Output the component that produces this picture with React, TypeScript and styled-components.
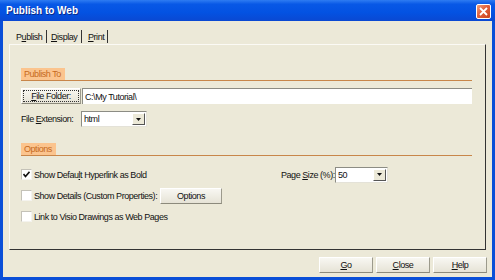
import React from 'react';
import styled, { createGlobalStyle } from 'styled-components';

const GlobalStyle = createGlobalStyle`
  html, body {
    margin: 0;
    padding: 0;
    background: #ece9d8;
  }
  body {
    font-family: 'Liberation Sans', Arial, sans-serif;
    font-size: 9px;
    letter-spacing: -0.45px;
    color: #111;
  }
`;

const Window = styled.div`
  width: 495px;
  height: 280px;
  display: flex;
  flex-direction: column;
  background: #0a4fd8;
  box-sizing: border-box;
`;

const TitleBar = styled.div`
  height: 21px;
  display: flex;
  align-items: center;
  justify-content: space-between;
  padding: 0 4px 0 6px;
  background: linear-gradient(#2e7cf2 0%, #0858e6 20%, #0352e2 60%, #0a48d2 100%);
`;

const Title = styled.span`
  font-weight: bold;
  font-size: 10px;
  letter-spacing: 0;
  color: #fff;
  text-shadow: 1px 1px 0 #0a2a8a;
`;

const CloseBox = styled.div`
  width: 15px;
  height: 15px;
  box-sizing: border-box;
  border: 1px solid #fff;
  border-radius: 2px;
  background: linear-gradient(135deg, #f0a07c 0%, #e0603c 45%, #c8441e 100%);
  display: flex;
  align-items: center;
  justify-content: center;
  margin-top: 1px;
`;

const Body = styled.div`
  flex: 1;
  margin: 0 3px 3px 3px;
  background: #ece9d8;
  padding: 7px 6px 0 6px;
  display: flex;
  flex-direction: column;
`;

const TabStrip = styled.div`
  display: flex;
  height: 16px;
  padding-left: 5px;
`;

const Tab = styled.div<{ $w: number; $pad: number }>`
  width: ${(p) => p.$w}px;
  box-sizing: border-box;
  padding-left: ${(p) => p.$pad}px;
  display: flex;
  align-items: center;
  border-right: 1px solid #333;
  margin-top: 2px;
  height: 13px;
  white-space: nowrap;
`;

const Panel = styled.div`
  height: 206px;
  box-sizing: border-box;
  border-left: 1px solid #fbfaf5;
  border-top: 1px solid #fbfaf5;
  border-right: 1px solid #333;
  border-bottom: 1px solid #333;
  padding: 23px 13px 0 11px;
  display: flex;
  flex-direction: column;
`;

const SectionHead = styled.div<{ $gap?: number }>`
  border-bottom: 1px solid #c8864a;
  display: flex;
  margin-top: ${(p) => p.$gap ?? 0}px;
`;

const HeadLabel = styled.span`
  background: #fbc48e;
  color: #c66a20;
  padding: 1px 4px 0 3px;
  height: 11px;
  line-height: 11px;
`;

const Row = styled.div<{ $gap?: number }>`
  display: flex;
  align-items: center;
  margin-top: ${(p) => p.$gap ?? 0}px;
`;

const XpButton = styled.button<{ $w: number; $focus?: boolean }>`
  width: ${(p) => p.$w}px;
  height: 16px;
  box-sizing: border-box;
  font: inherit;
  letter-spacing: inherit;
  color: #111;
  padding: 0;
  white-space: nowrap;
  border-top: 1px solid #fff;
  border-left: 1px solid #fff;
  border-right: 1px solid #9c9a8c;
  border-bottom: 1px solid #8c8a7c;
  background: linear-gradient(#f8f7f2, #e6e3d6);
  outline: ${(p) => (p.$focus ? '1px dotted #333' : 'none')};
  outline-offset: -3px;
`;

const TextInput = styled.div`
  flex: 1;
  height: 16px;
  box-sizing: border-box;
  background: #fff;
  border-top: 1px solid #8c8c84;
  border-left: 1px solid #8c8c84;
  padding-left: 2px;
  display: flex;
  align-items: center;
  margin-left: 1px;
`;

const Label = styled.span<{ $w?: number }>`
  width: ${(p) => (p.$w ? `${p.$w}px` : 'auto')};
  flex-shrink: 0;
  white-space: nowrap;
`;

const Select = styled.div<{ $w: number }>`
  width: ${(p) => p.$w}px;
  height: 16px;
  box-sizing: border-box;
  background: #fff;
  border-top: 1px solid #8c8c84;
  border-left: 1px solid #8c8c84;
  border-right: 1px solid #e4e2d8;
  border-bottom: 1px solid #e4e2d8;
  display: flex;
  align-items: center;
  padding-left: 2px;
`;

const SelectValue = styled.span`
  flex: 1;
`;

const Arrow = styled.div`
  width: 13px;
  height: 12px;
  box-sizing: border-box;
  margin-right: 1px;
  border-top: 1px solid #fff;
  border-left: 1px solid #fff;
  border-right: 1px solid #555;
  border-bottom: 1px solid #555;
  background: #ece9d8;
  display: flex;
  align-items: center;
  justify-content: center;
`;

const OptionsArea = styled.div`
  display: flex;
  margin-top: 8px;
`;

const CheckColumn = styled.div`
  width: 260px;
  display: flex;
  flex-direction: column;
`;

const CheckRow = styled.div`
  height: 21px;
  display: flex;
  align-items: center;
  white-space: nowrap;
`;

const Box = styled.div`
  width: 11px;
  height: 11px;
  box-sizing: border-box;
  margin-right: 2px;
  background: #fff;
  border-top: 1px solid #c4c2b8;
  border-left: 1px solid #c4c2b8;
  border-right: 1px solid #f4f3ee;
  border-bottom: 1px solid #f4f3ee;
  display: flex;
  align-items: center;
  justify-content: center;
`;

const SizeColumn = styled.div`
  height: 21px;
  display: flex;
  align-items: center;
`;

const Footer = styled.div`
  display: flex;
  justify-content: flex-end;
  gap: 3px;
  padding: 7px 0 0 0;
  margin-right: -1px;
`;

const Check = ({ checked }: { checked?: boolean }) => (
  <Box>
    {checked && (
      <svg width="7" height="7" viewBox="0 0 7 7">
        <path d="M0.5 3 L2.5 5.5 L6.5 0.8" stroke="#111" strokeWidth="1.6" fill="none" />
      </svg>
    )}
  </Box>
);

const DropArrow = () => (
  <Arrow>
    <svg width="5" height="3" viewBox="0 0 5 3">
      <path d="M0 0 H5 L2.5 3 Z" fill="#111" />
    </svg>
  </Arrow>
);

export default function App() {
  return (
    <>
      <GlobalStyle />
      <Window>
        <TitleBar>
          <Title>Publish to Web</Title>
          <CloseBox>
            <svg width="9" height="9" viewBox="0 0 9 9">
              <path d="M1 1 L8 8 M8 1 L1 8" stroke="#fff" strokeWidth="1.8" />
            </svg>
          </CloseBox>
        </TitleBar>
        <Body>
          <TabStrip>
            <Tab $w={33} $pad={2}>
              P<u>u</u>blish
            </Tab>
            <Tab $w={35} $pad={4}>
              <u>D</u>isplay
            </Tab>
            <Tab $w={26} $pad={6}>
              <u>P</u>rint
            </Tab>
          </TabStrip>
          <Panel>
            <SectionHead>
              <HeadLabel>Publish To</HeadLabel>
            </SectionHead>
            <Row $gap={7}>
              <XpButton $w={60} $focus>
                <u>F</u>ile Folder:
              </XpButton>
              <TextInput>C:\My Tutorial\</TextInput>
            </Row>
            <Row $gap={7}>
              <Label $w={60}>
                File <u>E</u>xtension:
              </Label>
              <Select $w={66}>
                <SelectValue>html</SelectValue>
                <DropArrow />
              </Select>
            </Row>
            <SectionHead $gap={16}>
              <HeadLabel>Options</HeadLabel>
            </SectionHead>
            <OptionsArea>
              <CheckColumn>
                <CheckRow>
                  <Check checked />
                  <span>
                    Show Defau<u>l</u>t Hyperlink as Bold
                  </span>
                </CheckRow>
                <CheckRow>
                  <Check />
                  <Label $w={126}>Show Details (Custom Properties):</Label>
                  <XpButton $w={62}>Options</XpButton>
                </CheckRow>
                <CheckRow>
                  <Check />
                  <span>Link to Visio Drawings as Web Pages</span>
                </CheckRow>
              </CheckColumn>
              <SizeColumn>
                <Label $w={54}>
                  Page <u>S</u>ize (%):
                </Label>
                <Select $w={53}>
                  <SelectValue>50</SelectValue>
                  <DropArrow />
                </Select>
              </SizeColumn>
            </OptionsArea>
          </Panel>
          <Footer>
            <XpButton $w={54}>
              <u>G</u>o
            </XpButton>
            <XpButton $w={54}>
              <u>C</u>lose
            </XpButton>
            <XpButton $w={54}>
              <u>H</u>elp
            </XpButton>
          </Footer>
        </Body>
      </Window>
    </>
  );
}
